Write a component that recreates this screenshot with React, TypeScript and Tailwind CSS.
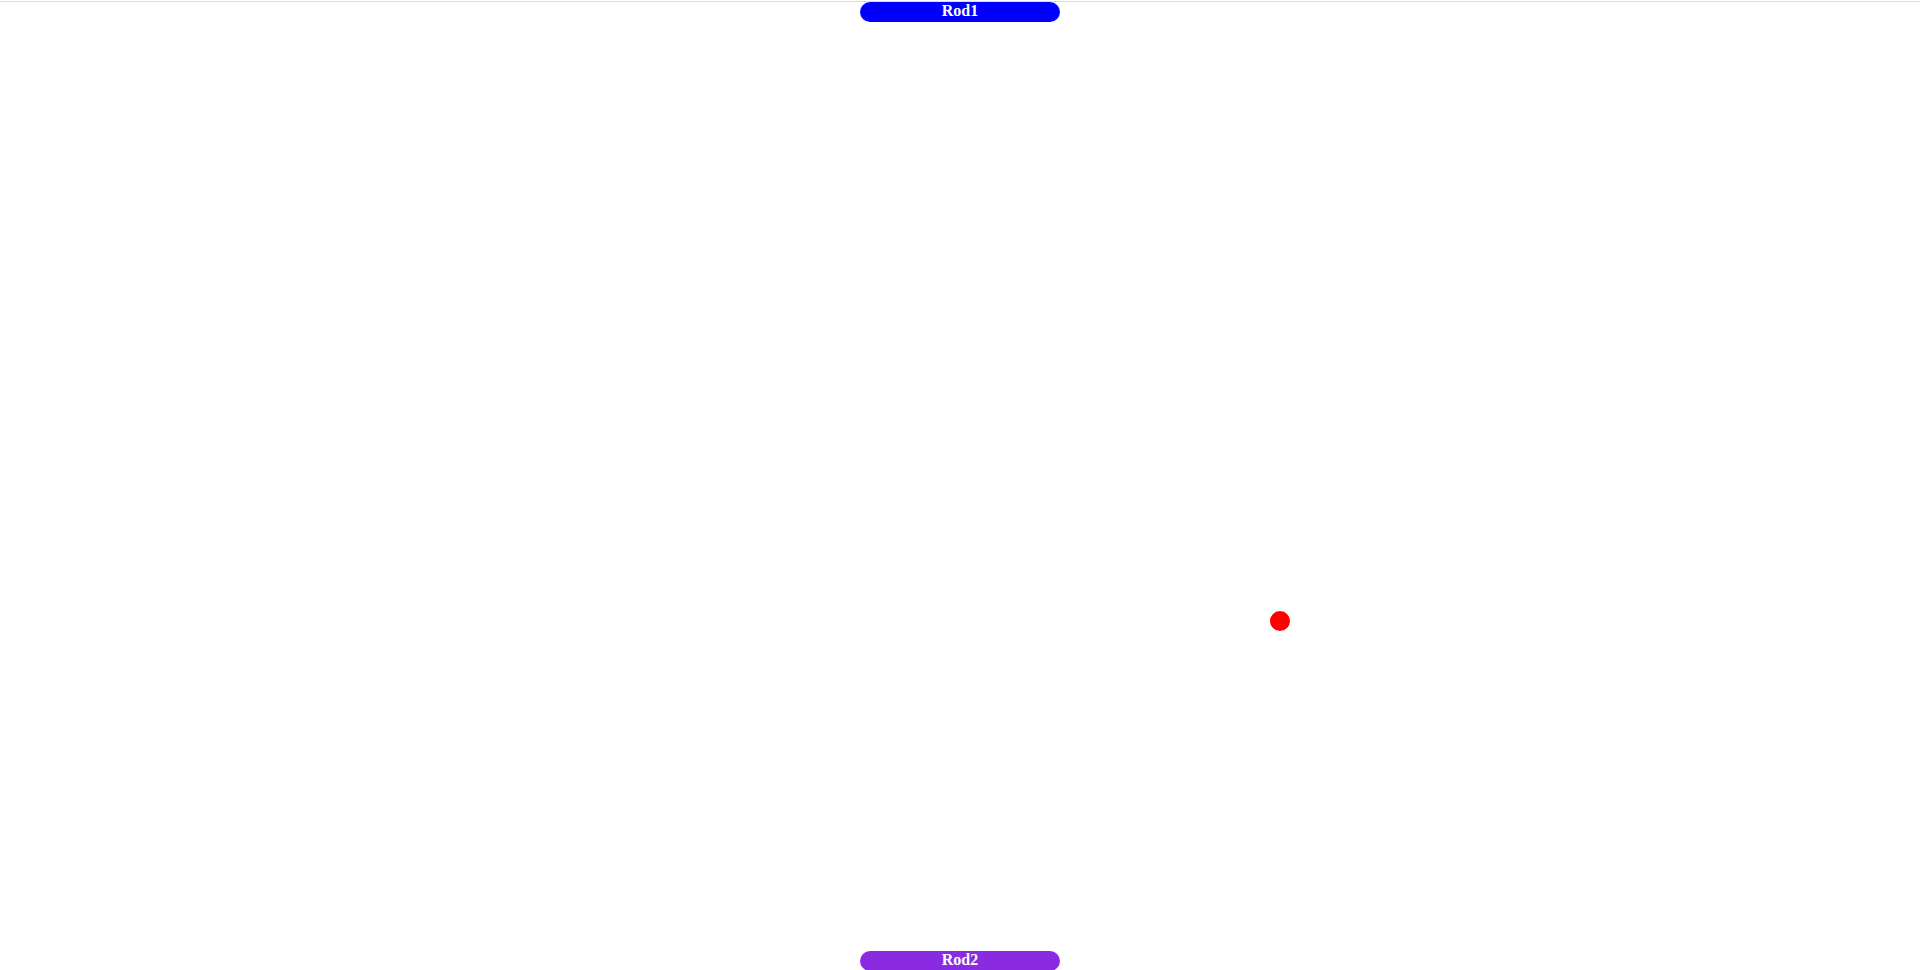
export default function App() {
  return (
    <div className="relative w-full h-[970px] overflow-hidden bg-white" style={{ fontFamily: '"Liberation Serif", serif' }}>
      <div className="absolute left-0 right-0 top-[1px] h-px bg-[#dcdcdc]" />
      <div className="absolute left-[860px] top-[2px] w-[200px] h-[20px] rounded-[10px] bg-[#0000ff] text-center text-white font-bold text-[16px] leading-[normal]">
        Rod1
      </div>
      <div className="absolute left-[1270px] top-[611px] w-[20px] h-[20px] rounded-full bg-[#ff0000]" />
      <div className="absolute left-[860px] top-[951px] w-[200px] h-[20px] rounded-[10px] bg-[#8a2be2] text-center text-white font-bold text-[16px] leading-[normal]">
        Rod2
      </div>
    </div>
  );
}
